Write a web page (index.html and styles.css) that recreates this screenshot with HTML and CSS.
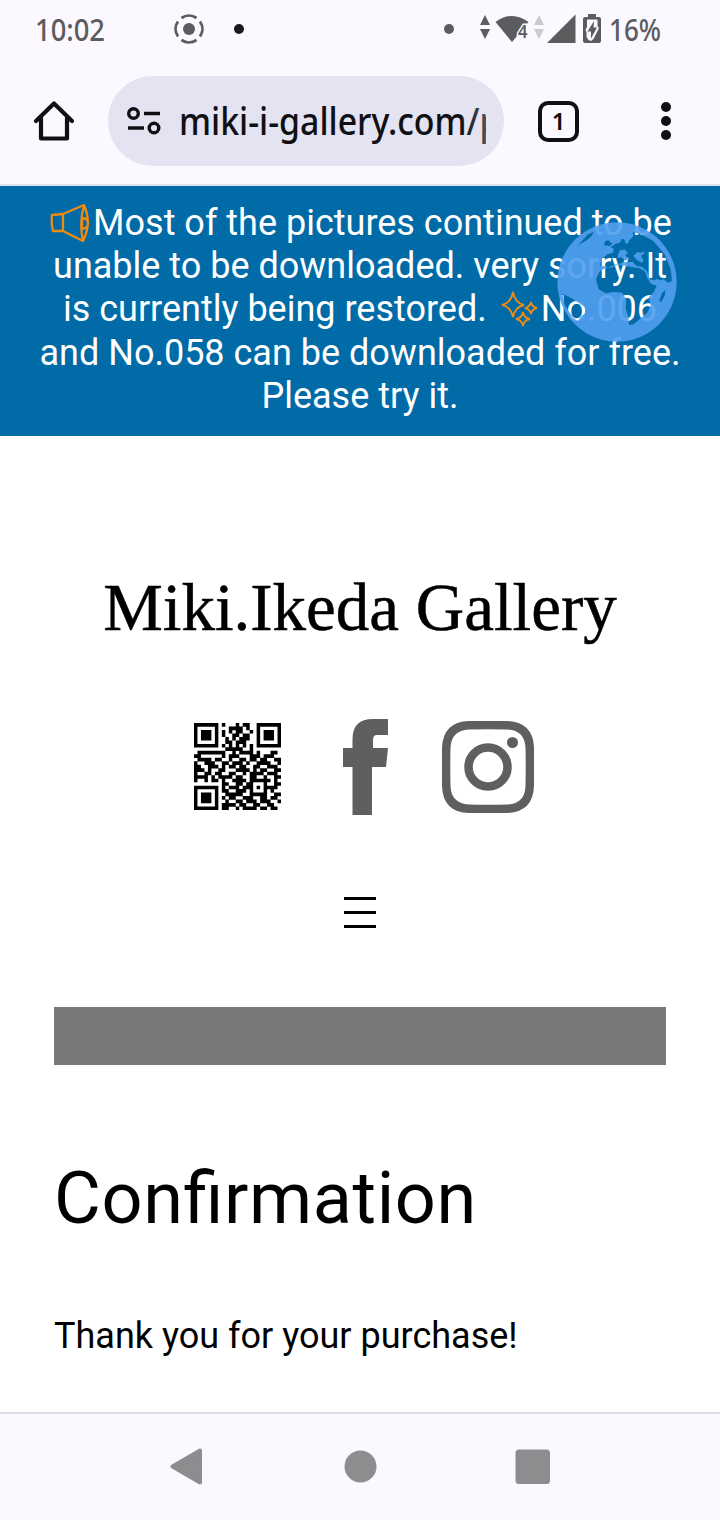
FILE: index.html
```html
<!DOCTYPE html>
<html lang="en">
<head>
<meta charset="utf-8">
<title>Miki.Ikeda Gallery</title>
<link rel="stylesheet" href="styles.css">
</head>
<body>
<header class="status">
  <svg width="720" height="60" viewBox="0 0 720 60">
    <g fill="#5c5c5f">
      <text class="sys" x="35" y="40.500" font-size="31" font-weight="500" textLength="70" lengthAdjust="spacingAndGlyphs">10:02</text>
      <circle cx="189" cy="29" r="6"/>
      <g fill="none" stroke="#5c5c5f" stroke-width="2.8">
        <path d="M181.5 18a13 13 0 0 1 15 0M200 21.500a13 13 0 0 1 0 15M196.500 40a13 13 0 0 1-15 0M178 36.500a13 13 0 0 1 0-15"/>
      </g>
      <circle cx="239" cy="29" r="5" fill="#1b1b1e"/>
      <circle cx="449" cy="29" r="5"/>
      <path d="M480 25l5-10 5 10zM480 29h10l-5 10z"/>
      <path d="M495.500 22Q512 10 528.500 22L525 26Q518 29 517 36L512 42z"/>
      <text class="sys" x="518" y="38" font-size="17" font-weight="600" textLength="9.500" lengthAdjust="spacingAndGlyphs" stroke="#fbf8ff" stroke-width="3" paint-order="stroke">4</text>
      <path fill="#cbcacf" d="M534 25l5-10 5 10zM534 29h10l-5 10z"/>
      <path d="M547 43L575.500 14.500V43z"/>
      <path d="M588 14h8v3h3q2 0 2 2v22q0 2-2 2h-14q-2 0-2-2V19q0-2 2-2h3z"/>
      <path fill="#faf8ff" d="M587 19.500h10.500v6.500l1.500 2-5.500 11-2.500 2-2.500-1-2-3v-5l-1-2 1.500-3z"/>
      <path d="M594 21l-6.500 10.500h3.500v7l6-11h-3.500z"/>
      <text class="sys" x="609" y="40.500" font-size="31" font-weight="500" textLength="52" lengthAdjust="spacingAndGlyphs">16%</text>
    </g>
  </svg>
</header>

<nav class="toolbar">
  <svg class="home" width="42" height="42" viewBox="0 0 42 42" fill="none" stroke="#101014" stroke-width="4.200" stroke-linejoin="round" stroke-linecap="round"><path d="M3 21L21 3.500 39 21M8 18v20.500h26V18"/></svg>
  <div class="address">
    <svg width="34" height="30" viewBox="0 0 34 30" fill="none" stroke="#101014" stroke-width="3.400"><circle cx="6.500" cy="7.500" r="4.800"/><path d="M17 7.500h16M1 22h16"/><circle cx="27" cy="22" r="4.800"/></svg>
    <svg class="url" width="306" height="50" viewBox="0 0 306 50">
      <defs><linearGradient id="fade" gradientUnits="userSpaceOnUse" x1="280" x2="306"><stop stop-color="#101014"/><stop offset="1" stop-color="#4c4c55"/></linearGradient></defs>
      <text class="sys" x="-1" y="34" font-size="37.500" font-weight="500" fill="url(#fade)" textLength="321.500" lengthAdjust="spacingAndGlyphs">miki-i-gallery.com/p</text>
    </svg>
  </div>
  <div class="tabs">1</div>
  <div class="more"><i></i><i></i><i></i></div>
</nav>

<main>
  <section class="banner">
    <p><svg class="horn" width="40" height="40" viewBox="0 0 40 40" fill="none" stroke="#ee8b13" stroke-width="2.300" stroke-linejoin="round"><path d="M2 12L13 11v17L3 28Q1 20 2 12zM13 11L34 2M13 28l20 10"/><path d="M34 2Q42 20 33 38 29 20 34 2zM32 15q7 1 6 6 0 4-6 5z"/></svg>Most of the pictures continued to be<br>
    unable to be downloaded. very sorry. It<br>
    is currently being restored. <svg class="spark" width="40" height="38" viewBox="0 0 40 38" fill="none" stroke="#ee8b13" stroke-width="1.800"><path d="M13 2Q15 13 24 15 15 17 13 27 11 17 2 15 11 13 13 2zM31 12q1 5 6 6-5 1-6 6-1-5-6-6 5-1 6-6zM23 22q1 6 7 7-6 1-7 7-1-6-7-7 6-1 7-7z"/></svg>No.006<br>
    and No.058 can be downloaded for free.<br>
    Please try it.</p>
    <svg class="globe" viewBox="201 66 360 360" fill="#509eef">
      <path fill-rule="evenodd" d="M381 67a179 179 0 1 0 .1 0zM265 134l16-16 10-13 20-10-8 16-16 12zM342 135l4-12 9-2 12 10-8 7zM330 196l6-20 16-13 16-4 4-13-10-4 14-10 12-14 12-1 8 6 10-2 12-12-2-12 22 4 40 22 34 40 18 44 4 36L534 248 521 238 510 241 501 237 493 241 480 238 470 212 456 200 440 198 428 186 400 186 386 193 362 203zM318 237l12-24 18-9 30-11 34 6 37 6 16 9 6 18 12 19 17 6-9 20-14 13 5 27-11 22-21 17-19 17-14 2-2-25-8-25 2-26-12-21-28-2-22 4-21-12zM217 281l25 12 21 14 21 14 2 17-14 12-8 13-14-9-14-21-12-18zM516 280l10-10-2 18-11 18-5-4z"/>
      <path d="M374 122l12-9 10 6-8 10-10 2zM404 120l10-5 3 12-10 6zM388 152l16-4 10 12-8 6 10 10-10 6-12-10-12 2zM430 168l12-12 14 2 8-6-2 10-9 5 8 15-6 6-14-8z"/>
    </svg>
  </section>

  <h1>Miki.Ikeda Gallery</h1>

  <div class="social">
    <svg id="qr" class="qr" width="87" height="87" viewBox="0 0 25 25"></svg>
    <svg class="fb" width="46" height="96" viewBox="0 0 46 96"><path fill="#5f5f5f" d="M45 0v16H34q-4 0-4 5v8h15l-2 19H29v48H9.500V48H0V29h9.500V20Q9.500 0 30 0z"/></svg>
    <svg class="ig" width="92" height="92" viewBox="0 0 92 92" fill="none" stroke="#5f5f5f" stroke-width="8.500"><path d="M27 4.250Q46 3.800 65 4.250Q87 5 87.750 27Q88.200 46 87.750 65Q87 87 65 87.750Q46 88.200 27 87.750Q5 87 4.250 65Q3.800 46 4.250 27Q5 5 27 4.250z"/><circle cx="46" cy="46" r="19.500"/><circle cx="70.500" cy="21.500" r="5.500" fill="#5f5f5f" stroke="none"/></svg>
  </div>

  <div class="menu"><i></i><i></i><i></i></div>
  <div class="bar"></div>
  <h2>Confirmation</h2>
  <p class="thanks">Thank you for your purchase!</p>
</main>

<footer class="system-nav">
  <svg width="720" height="106" viewBox="0 0 720 106" fill="#8d8d8f"><path stroke="#8d8d8f" stroke-width="4" stroke-linejoin="round" d="M172.500 52.500L200 36.500v32z"/><circle cx="360.500" cy="52.500" r="16"/><rect x="515.500" y="35.500" width="34.500" height="34.500" rx="3.500"/></svg>
</footer>
<script src="qr.js"></script>
</body>
</html>
```

FILE: styles.css
```css
* { box-sizing: border-box; }
body { margin: 0; width: 720px; height: 1520px; overflow: hidden; display: flex; flex-direction: column; background: #fff; color: #000; font-family: Roboto, sans-serif; }
h1, h2, p { margin: 0; font-weight: 400; }
svg { flex: none; }
.sys { font-family: "Noto Sans", sans-serif; }
.status { height: 60px; background: #fbf8ff; }
.status svg, .system-nav svg { display: block; }
.toolbar { height: 126px; padding: 16px 0 0 33px; display: flex; align-items: flex-start; background: #fbf8ff; border-bottom: 2px solid #d9e2ed; }
.home { margin-top: 24px; }
.address { width: 396px; height: 90px; margin-left: 33px; padding-left: 19px; border-radius: 45px; background: #e4e3f1; display: flex; align-items: center; }
.url { margin: 10px 0 0 19px; overflow: hidden; }
.tabs { width: 41px; height: 41px; margin: 25px 0 0 34px; border: 4px solid #101014; border-radius: 10px; font: 600 24px/32px "Noto Sans", sans-serif; text-align: center; color: #101014; }
.more { display: flex; flex-direction: column; gap: 4px; margin: 26px 0 0 82px; }
.more i { width: 10px; height: 10px; border-radius: 50%; background: #101014; }
main { height: 1226px; }
.banner { position: relative; height: 250px; padding-top: 16px; background: #006ba6; color: #fff; text-align: center; font-size: 36px; line-height: 43.200px; white-space: nowrap; }
.horn { margin: 0 3px -8px 2px; }
.spark { margin: 0 1px -7px 4px; }
.globe { position: absolute; left: 557px; top: 36px; width: 120px; height: 120px; opacity: .9; }
h1 { height: 283px; padding-top: 131px; font: 67px/80px "Liberation Serif", serif; text-align: center; white-space: nowrap; -webkit-text-stroke: .5px #000; }
.social { height: 178px; display: flex; align-items: flex-start; padding-left: 194px; }
.qr { margin-top: 4px; }
.fb { margin-left: 62px; }
.ig { margin: 2px 0 0 53px; }
.menu { width: 32px; height: 110px; margin: 0 auto; display: flex; flex-direction: column; gap: 11px; }
.menu i { height: 3px; background: #000; }
.bar { height: 58px; margin: 0 54px; background: #797979; }
h2 { padding: 91px 54px 0; font-size: 72px; line-height: 86px; letter-spacing: .6px; font-feature-settings: "liga" 1; }
.thanks { padding: 73px 54px 0; font-size: 36px; line-height: 43px; }
.system-nav { height: 108px; border-top: 2px solid #dedce8; background: #fbf8ff; }
```

FILE: qr.js
```javascript
const rows = [
  "1111111010001011001111111",
  "1000001000111101001000001",
  "1011101010101100101011101",
  "1011101010011011001011101",
  "1011101001010111001011101",
  "1000001001101110001000001",
  "1111111010101010101111111",
  "0000000001111100100000000",
  "0111111110010111101000110",
  "1100000010111000111011100",
  "0111101100100110110110011",
  "1001110011011101001111001",
  "1100111010110110011001110",
  "1110100110001111010110011",
  "1001101100110010111101110",
  "1111010111101100110010011",
  "1001011010011110111111010",
  "0000000011001101100010011",
  "1111111010111011101011110",
  "1000001011001110100010100",
  "1011101001111100111110011",
  "1011101010110011100110110",
  "1011101001001101110111001",
  "1000001011110110011001100",
  "1111111011001011110110110"
];
let d = "";
rows.forEach((row, y) => {
  for (const run of row.matchAll(/1+/g)) {
    d += `M${run.index} ${y}h${run[0].length}v1.050h-${run[0].length}z`;
  }
});
const path = document.createElementNS("http://www.w3.org/2000/svg", "path");
path.setAttribute("d", d);
document.getElementById("qr").append(path);
```
